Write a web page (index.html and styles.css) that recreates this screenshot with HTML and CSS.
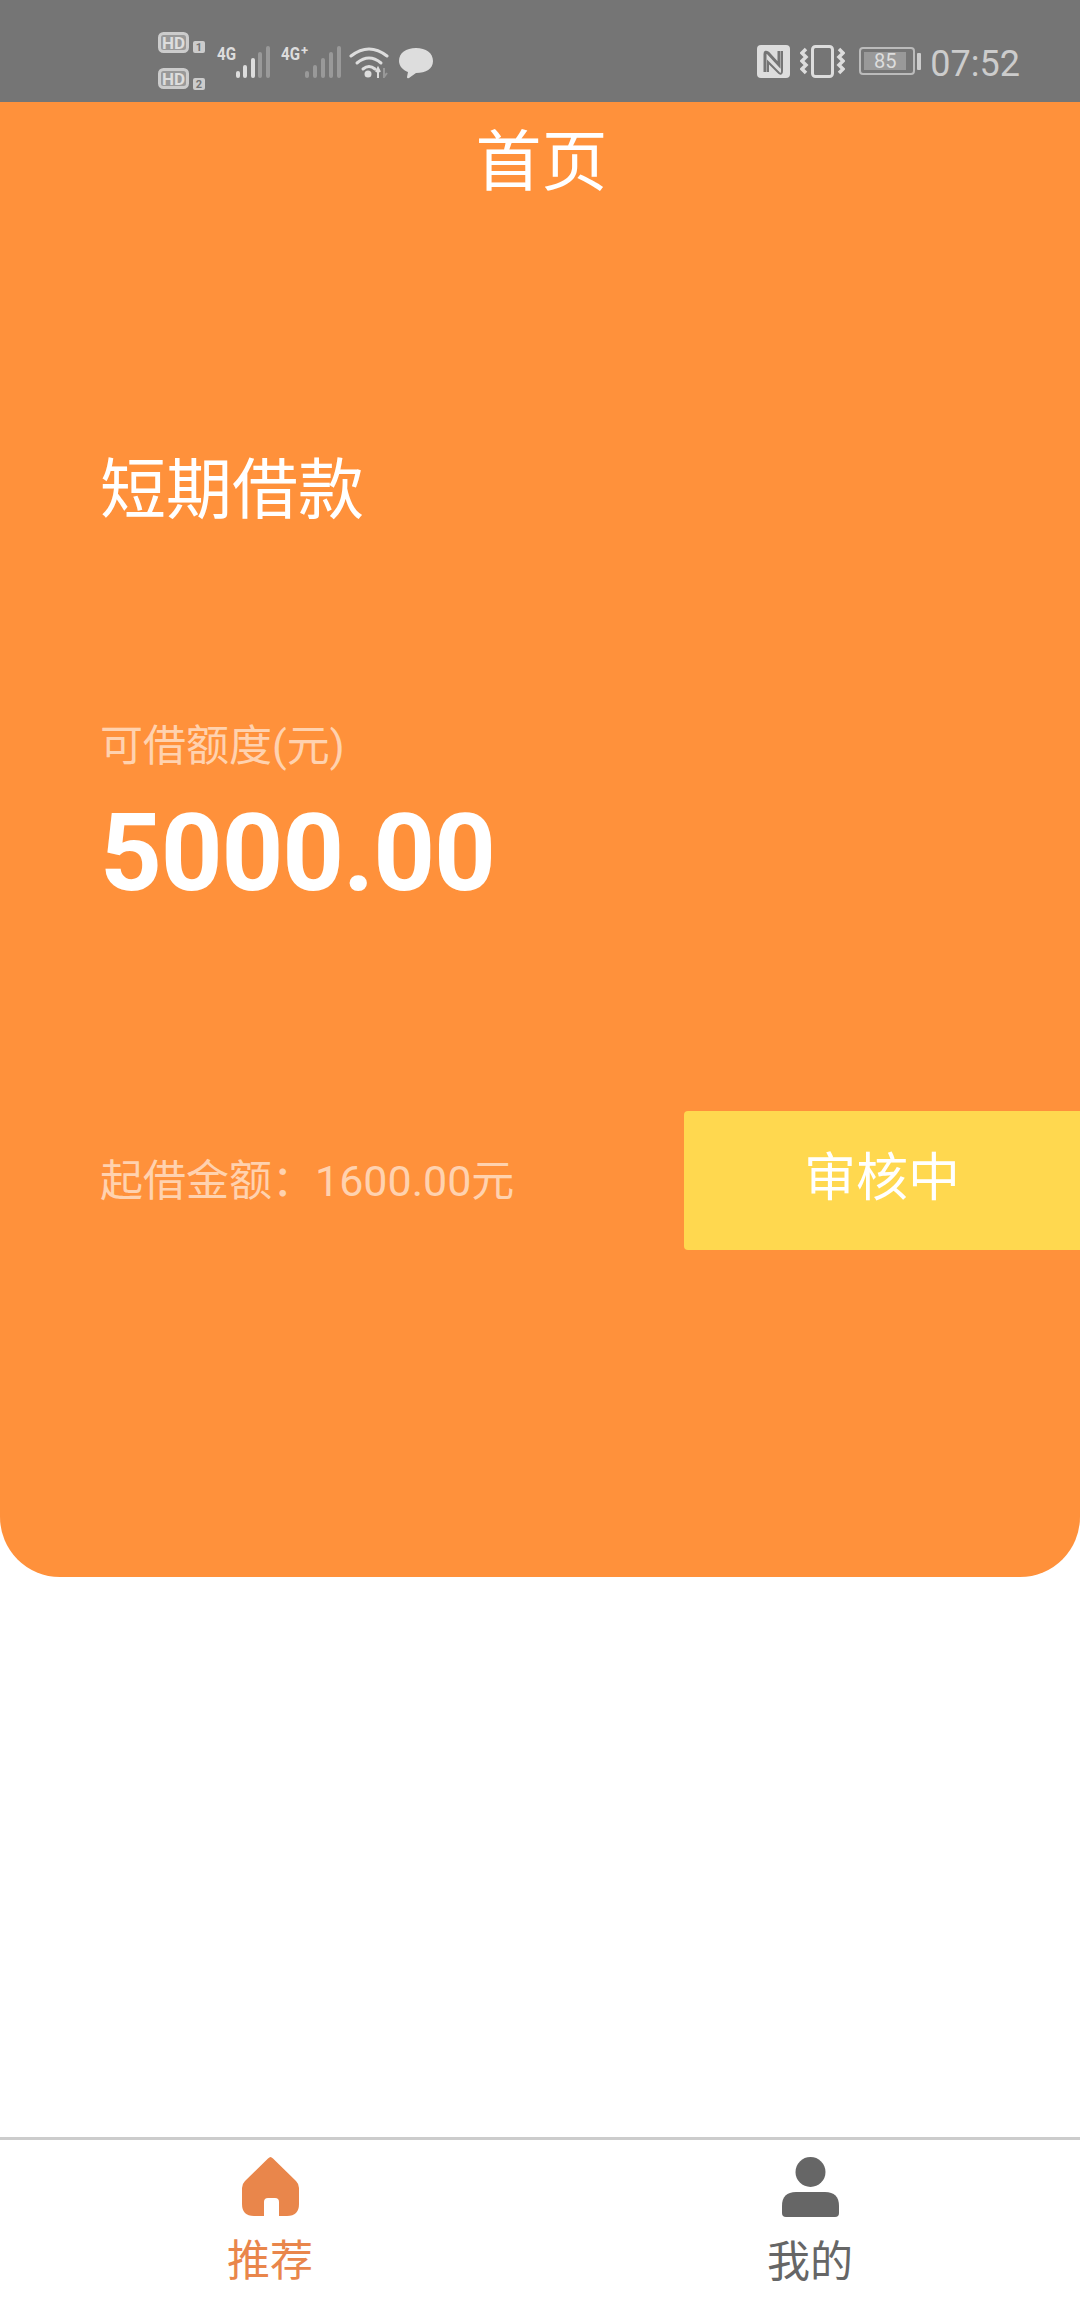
FILE: index.html
```html
<!DOCTYPE html>
<html lang="zh-CN">
<head>
    <meta charset="UTF-8">
    <meta name="viewport" content="width=device-width, initial-scale=1.0">
    <title>首页</title>
    <link rel="stylesheet" href="styles.css">
</head>
<body>
    <div class="status-bar">
        <div class="status-group">
            <svg class="icon-hd" viewBox="-2 -4 52 66" width="52" height="66">
                <rect x="1.5" y="1.5" width="28" height="18" rx="4" fill="#999" stroke="#ccc" stroke-width="3"/>
                <text x="15.5" y="16.5" class="hd-text">HD</text>
                <rect x="35" y="9" width="12" height="12" rx="2" fill="#ccc"/>
                <text x="41" y="19" class="hd-num">1</text>
                <rect x="1.5" y="37.5" width="28" height="18" rx="4" fill="#999" stroke="#ccc" stroke-width="3"/>
                <text x="15.5" y="52.5" class="hd-text">HD</text>
                <rect x="35" y="46" width="12" height="12" rx="2" fill="#ccc"/>
                <text x="41" y="56" class="hd-num">2</text>
            </svg>
            <svg class="icon-signal" viewBox="-2 -4 56 38" width="56" height="38">
                <text x="0" y="15" class="net-text" textLength="19" lengthAdjust="spacingAndGlyphs">4G</text>
                <rect x="19" y="26" width="4" height="7" rx="2" fill="#ddd"/>
                <rect x="26" y="20" width="4" height="13" rx="2" fill="#ddd"/>
                <rect x="34" y="13" width="4" height="20" rx="2" fill="#ddd"/>
                <rect x="41" y="7" width="4" height="26" rx="2" fill="#999"/>
                <rect x="49" y="1" width="4" height="32" rx="2" fill="#999"/>
            </svg>
            <svg class="icon-signal" viewBox="-2 -4 62 38" width="62" height="38">
                <text x="0" y="15" class="net-text" textLength="19" lengthAdjust="spacingAndGlyphs">4G</text>
                <text x="20" y="10" class="net-plus">+</text>
                <rect x="24" y="26" width="4" height="7" rx="2" fill="#999"/>
                <rect x="32" y="20" width="4" height="13" rx="2" fill="#999"/>
                <rect x="40" y="13" width="4" height="20" rx="2" fill="#999"/>
                <rect x="48" y="7" width="4" height="26" rx="2" fill="#999"/>
                <rect x="56" y="1" width="4" height="32" rx="2" fill="#999"/>
            </svg>
            <svg class="icon-wifi" viewBox="0 0 40 33" width="40" height="33">
                <path d="M2 11 Q20 -3 38 11" fill="none" stroke="#ddd" stroke-width="3" stroke-linecap="round"/>
                <path d="M8 18 Q20 8 32 18" fill="none" stroke="#ddd" stroke-width="3" stroke-linecap="round"/>
                <path d="M14 24 Q20 19 26 24" fill="none" stroke="#ddd" stroke-width="3" stroke-linecap="round"/>
                <circle cx="19" cy="29" r="3.5" fill="#ddd"/>
                <path d="M29 33 V23 M27 27 L29 23 L31 27" fill="none" stroke="#ddd" stroke-width="2"/>
                <path d="M35 23 V32 L38 28" fill="none" stroke="#999" stroke-width="2"/>
            </svg>
            <svg class="icon-chat" viewBox="0 0 34 32" width="34" height="32">
                <path d="M17 1 C27 1 34 6 34 14 C34 22 27 26 17 26 L10 31 Q8 32 8 30 L9 25 C4 23 0 19 0 14 C0 6 7 1 17 1 Z" fill="#ddd"/>
            </svg>
        </div>
        <div class="status-group right">
            <svg class="icon-nfc" viewBox="0 0 33 33" width="33" height="33">
                <rect width="33" height="33" rx="4" fill="#ddd"/>
                <path d="M8 27 V9 Q8 6 11 8 L22 20 V6" fill="none" stroke="#757575" stroke-width="3"/>
                <path d="M11 27 V17 L22 28 Q25 30 25 26 V6" fill="none" stroke="#757575" stroke-width="2"/>
            </svg>
            <svg class="icon-vibrate" viewBox="0 0 45 33" width="45" height="33">
                <rect x="12.5" y="1.5" width="20" height="30" rx="3" fill="none" stroke="#ddd" stroke-width="3"/>
                <path d="M6 4 L2 8 L6 12 L2 16 L6 20 L2 24 L6 28" fill="none" stroke="#ddd" stroke-width="3.5"/>
                <path d="M39 4 L43 8 L39 12 L43 16 L39 20 L43 24 L39 28" fill="none" stroke="#ddd" stroke-width="3.5"/>
            </svg>
            <div class="battery">
                <div class="battery-body"><span class="battery-level">85</span></div>
                <div class="battery-nub"></div>
            </div>
            <span class="clock">07:52</span>
        </div>
    </div>

    <div class="card">
        <div class="card-title">首页</div>
        <div class="card-name">短期借款</div>
        <div class="limit-label">可借额度(元)</div>
        <div class="limit-amount">5000.00</div>
        <div class="card-footer">
            <span class="min-amount">起借金额：1600.00元</span>
            <div class="status-button">审核中</div>
        </div>
    </div>

    <div class="spacer"></div>

    <div class="tab-bar">
        <div class="tab active">
            <svg viewBox="0 0 57 59" width="57" height="59">
                <path d="M28.5 0 Q29.5 0 31 1.5 L54 24 Q57 27 57 31 V47 Q57 59 45 59 H37 V45 Q37 41 33 41 H26 Q22 41 22 45 V59 H12 Q0 59 0 47 V31 Q0 27 3 24 L26 1.5 Q27.5 0 28.5 0 Z" fill="#e9864b"/>
            </svg>
            <span class="tab-label">推荐</span>
        </div>
        <div class="tab">
            <svg viewBox="0 0 57 60" width="57" height="60">
                <ellipse cx="28.5" cy="15" rx="15" ry="15" fill="#666"/>
                <path d="M14 35 H43 Q57 35 57 49 V56 Q57 60 53 60 H4 Q0 60 0 56 V49 Q0 35 14 35 Z" fill="#666"/>
            </svg>
            <span class="tab-label">我的</span>
        </div>
    </div>
</body>
</html>
```

FILE: styles.css
```css
* {
    box-sizing: border-box;
}

body {
    margin: 0;
    height: 2310px;
    display: flex;
    flex-direction: column;
    background-color: #fff;
    font-family: Roboto, "Noto Sans CJK SC", sans-serif;
}

/* Status bar */
.status-bar {
    height: 102px;
    flex-shrink: 0;
    padding: 28px 60px 0 156px;
    display: flex;
    justify-content: space-between;
    align-items: flex-start;
    background-color: #757575;
    color: #ccc;
}

.status-group {
    display: flex;
    align-items: flex-start;
}

.icon-hd {
    margin-right: 9px;
}

.icon-signal {
    margin-top: 13px;
    margin-left: -2px;
    margin-right: 10px;
}

.icon-wifi {
    margin-top: 17px;
    margin-left: -2px;
    margin-right: 10px;
}

.icon-chat {
    margin-top: 19px;
}

.hd-text {
    font: 700 17px Roboto, sans-serif;
    fill: #ddd;
    text-anchor: middle;
}

.hd-num {
    font: 700 11px Roboto, sans-serif;
    fill: #757575;
    text-anchor: middle;
}

.net-text {
    font: 700 19px Roboto, sans-serif;
    fill: #ddd;
}

.net-plus {
    font: 700 13px Roboto, sans-serif;
    fill: #ddd;
}

.status-group.right {
    padding-top: 17px;
}

.icon-nfc {
    margin-right: 10px;
}

.icon-vibrate {
    margin-right: 14px;
}

.battery {
    display: flex;
    align-items: center;
    margin-top: 2px;
    margin-right: 9px;
}

.battery-body {
    width: 56px;
    height: 28px;
    padding: 3px;
    border: 2px solid #bbb;
    border-radius: 4px;
}

.battery-level {
    display: block;
    width: 42px;
    height: 18px;
    background-color: #999;
    color: #ddd;
    font-size: 20px;
    line-height: 18px;
    text-align: center;
}

.battery-nub {
    width: 4px;
    height: 17px;
    margin-left: 2px;
    background-color: #ccc;
    border-radius: 1px;
}

.clock {
    font-size: 36px;
    line-height: 38px;
    color: #ccc;
}

/* Orange card */
.card {
    height: 1475px;
    flex-shrink: 0;
    background-color: #ff913b;
    border-radius: 0 0 60px 60px;
    color: #fff;
}

.card-title {
    height: 116px;
    padding-left: 3px;
    font-size: 66px;
    line-height: 122px;
    text-align: center;
}

.card-name {
    margin-top: 233px;
    padding-left: 100px;
    font-size: 66px;
    line-height: 80px;
}

.limit-label {
    margin-top: 187px;
    padding-left: 100px;
    font-size: 43px;
    line-height: 56px;
    color: rgba(255, 255, 255, 0.6);
}

.limit-amount {
    margin-top: 19px;
    padding-left: 100px;
    font-size: 108px;
    font-weight: 700;
    line-height: 120px;
    letter-spacing: -1.2px;
}

.card-footer {
    margin-top: 198px;
    padding-left: 100px;
    display: flex;
    justify-content: space-between;
    align-items: center;
}

.min-amount {
    margin-top: -8px;
    font-size: 43px;
    color: rgba(255, 255, 255, 0.6);
}

.status-button {
    width: 396px;
    height: 139px;
    background-color: #ffd84f;
    border-radius: 4px 0 0 4px;
    font-size: 52px;
    line-height: 136px;
    text-align: center;
}

.spacer {
    flex: 1;
}

/* Bottom tabs */
.tab-bar {
    height: 173px;
    flex-shrink: 0;
    border-top: 3px solid #ccc;
    padding-top: 17px;
    display: grid;
    grid-template-columns: 1fr 1fr;
}

.tab {
    display: flex;
    flex-direction: column;
    align-items: center;
    color: #666;
}

.tab.active {
    color: #e9864b;
}

.tab-label {
    margin-top: 17px;
    font-size: 43px;
    line-height: 56px;
}
```
